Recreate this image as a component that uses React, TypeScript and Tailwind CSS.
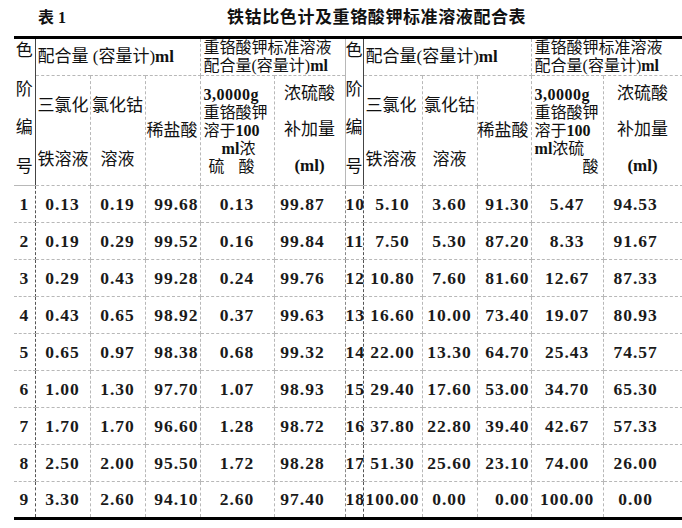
import React from "react";

const cjk = '"Liberation Serif", "Noto Sans CJK SC", serif';

const leftRows = [
  ["1", "0.13", "0.19", "99.68", "0.13", "99.87"],
  ["2", "0.19", "0.29", "99.52", "0.16", "99.84"],
  ["3", "0.29", "0.43", "99.28", "0.24", "99.76"],
  ["4", "0.43", "0.65", "98.92", "0.37", "99.63"],
  ["5", "0.65", "0.97", "98.38", "0.68", "99.32"],
  ["6", "1.00", "1.30", "97.70", "1.07", "98.93"],
  ["7", "1.70", "1.70", "96.60", "1.28", "98.72"],
  ["8", "2.50", "2.00", "95.50", "1.72", "98.28"],
  ["9", "3.30", "2.60", "94.10", "2.60", "97.40"],
];

const rightRows = [
  ["10", "5.10", "3.60", "91.30", "5.47", "94.53"],
  ["11", "7.50", "5.30", "87.20", "8.33", "91.67"],
  ["12", "10.80", "7.60", "81.60", "12.67", "87.33"],
  ["13", "16.60", "10.00", "73.40", "19.07", "80.93"],
  ["14", "22.00", "13.30", "64.70", "25.43", "74.57"],
  ["15", "29.40", "17.60", "53.00", "34.70", "65.30"],
  ["16", "37.80", "22.80", "39.40", "42.67", "57.33"],
  ["17", "51.30", "25.60", "23.10", "74.00", "26.00"],
  ["18", "100.00", "0.00", "0.00", "100.00", "0.00"],
];

const colWidths = [21, 55, 55, 55, 74, 71, 18, 59, 55, 54, 72, 79];

const cell = "border border-dashed border-[#b8b8b8] p-0";

// alignment per column inside one half
const numAlign = [
  "text-center",
  "text-center",
  "text-center",
  "text-right pr-[1px]",
  "text-center",
  "text-center pr-[14px]",
];

function HeaderHalf({ right }: { right?: boolean }) {
  return (
    <>
      <td
        rowSpan={2}
        className={`${cell} border-r-[1.5px] border-r-[#444] border-solid align-top ${right ? "" : "border-l-0"}`}
      >
        <div className="flex h-[146px] flex-col items-center justify-between pt-[2px] pb-[8px] text-[17px] leading-[20px]">
          <span>色</span>
          <span>阶</span>
          <span>编</span>
          <span>号</span>
        </div>
      </td>
      <td colSpan={3} className={`${cell} h-[37px] pl-[2px] align-middle text-[17px]`}>
        {right ? "配合量(容量计)" : "配合量 (容量计)"}
        <span className="font-bold">ml</span>
      </td>
      <td
        colSpan={2}
        className={`${cell} pl-[3px] align-middle text-[16px] leading-[18px] ${right ? "" : "border-r-solid border-r-[#888]"}`}
      >
        <div className="whitespace-nowrap">重铬酸钾标准溶液</div>
        <div className="whitespace-nowrap">
          配合量(容量计)<span className="font-bold">ml</span>
        </div>
      </td>
    </>
  );
}

function SubHeaderHalf({ right }: { right?: boolean }) {
  return (
    <>
      <td className={`${cell} align-top`}>
        <div className="flex h-[108px] flex-col justify-between pt-[20px] pb-[14px] pl-[2px] text-[17px] leading-[20px]">
          <span>三氯化</span>
          <span>铁溶液</span>
        </div>
      </td>
      <td className={`${cell} align-top`}>
        <div className="flex h-[108px] flex-col items-center justify-between pt-[20px] pb-[14px] text-[17px] leading-[20px]">
          <span>氯化钴</span>
          <span>溶液</span>
        </div>
      </td>
      <td className={`${cell} text-right pr-[2px] align-middle text-[17px]`}>稀盐酸</td>
      <td className={`${cell} pl-[3px] align-middle text-[16px] leading-[18px]`}>
        <div className="font-bold tracking-[0.5px]">3,0000g</div>
        <div>重铬酸钾</div>
        <div>
          溶于<span className="font-bold">100</span>
        </div>
        {right ? (
          <>
            <div>
              <span className="font-bold">ml</span>浓硫
            </div>
            <div className="pr-[4px] text-right">酸</div>
          </>
        ) : (
          <>
            <div className="text-center">
              <span className="font-bold">ml</span>浓
            </div>
            <div className="text-center tracking-[14px]">硫酸</div>
          </>
        )}
      </td>
      <td className={`${cell} align-top ${right ? "" : "border-r-solid border-r-[#888]"}`}>
        <div className="flex h-[108px] flex-col items-center justify-between pt-[8px] pb-[8px] text-[17px] leading-[20px]">
          <span>浓硫酸</span>
          <span>补加量</span>
          <span className="font-bold">(ml)</span>
        </div>
      </td>
    </>
  );
}

function DataHalf({ row, right }: { row: string[]; right?: boolean }) {
  return (
    <>
      {row.map((v, i) => (
        <td
          key={i}
          className={`${cell} h-[37px] align-middle font-bold text-[17.5px] tracking-[1px] text-[#1a1a1a] ${numAlign[i]} ${
            i === 0 ? `border-r-solid border-r-[#555] ${right ? "tracking-[-0.5px] text-[16px]" : "border-l-0"}` : ""
          } ${i === 5 && !right ? "border-r-solid border-r-[#888]" : ""} ${
            right && (v === "100.00" || v.length === 5) && i !== 3 && i !== 5 ? "tracking-[0.3px]" : ""
          }`}
        >
          {v}
        </td>
      ))}
    </>
  );
}

export default function App() {
  return (
    <div
      className="h-[528px] w-[682px] overflow-hidden bg-white text-[#111]"
      style={{ fontFamily: cjk }}
    >
      {/* Caption */}
      <div className="flex h-[36px] items-center pl-[38px] text-[16px] font-bold">
        <span className="w-[189px]">表 1</span>
        <span className="text-[17px] tracking-[0.6px]">铁钴比色计及重铬酸钾标准溶液配合表</span>
      </div>

      <table
        className="ml-[14px] table-fixed border-collapse border-t-[3px] border-b-[3px] border-t-black border-b-black"
        style={{ width: 668 }}
      >
        <colgroup>
          {colWidths.map((w, i) => (
            <col key={i} style={{ width: w }} />
          ))}
        </colgroup>
        <tbody>
          <tr>
            <HeaderHalf />
            <HeaderHalf right />
          </tr>
          <tr>
            <SubHeaderHalf />
            <SubHeaderHalf right />
          </tr>
          {leftRows.map((row, r) => (
            <tr key={r}>
              <DataHalf row={row} />
              <DataHalf row={rightRows[r]} right />
            </tr>
          ))}
        </tbody>
      </table>
    </div>
  );
}
